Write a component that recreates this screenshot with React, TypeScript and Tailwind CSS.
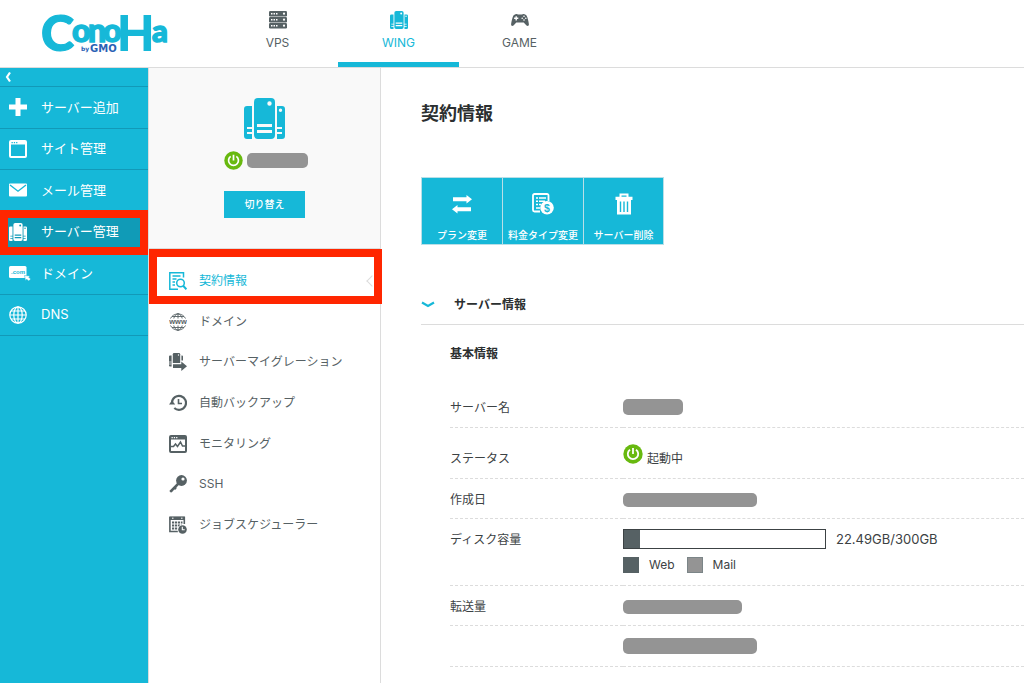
import type { ReactNode } from "react"
import clsx from "clsx"

type IconProps = { className?: string }

const Logo = () => (
    <svg viewBox="0 0 140 56" className="w-[140px] h-14 overflow-visible" role="img" aria-label="ConoHa by GMO">
        <g fill="#16b8d8" stroke="#16b8d8" fontFamily="Lato, sans-serif" fontWeight="900">
            <text x="1" y="51" fontSize="50" strokeWidth="1.2">C</text>
            <text x="32 48 63" y="42" fontSize="32" strokeWidth="1.4">ono</text>
            <text x="77" y="51" fontSize="52" strokeWidth="0" fontFamily="Liberation Sans, sans-serif" fontWeight="700">H</text>
            <text x="112" y="42" fontSize="31" strokeWidth="1.4">a</text>
        </g>
        <g fill="#2a5fb4" fontFamily="DejaVu Sans, sans-serif" fontWeight="700">
            <text x="41" y="51" fontSize="6">by</text>
            <text x="50" y="52" fontSize="10">GMO</text>
        </g>
    </svg>
)

const ServerIcon = ({ className }: IconProps) => (
    <svg viewBox="0 0 41 41" className={className} fill="currentColor" fillRule="evenodd" aria-hidden="true">
        <path d="M14 0h13a4 4 0 0 1 4 4v33a4 4 0 0 1-4 4H14a4 4 0 0 1-4-4V4a4 4 0 0 1 4-4ZM25.5 3.3a2.2 2.2 0 1 0 0 4.4a2.2 2.2 0 0 0 0-4.4ZM13 26v3h15v-3ZM13 32v3h15v-3Z" />
        <path d="M3 8h5v21H3v2h5v3H3v2h5v5H3a3 3 0 0 1-3-3V11a3 3 0 0 1 3-3Z" />
        <path d="M33 8h5a3 3 0 0 1 3 3v27a3 3 0 0 1-3 3h-5v-5h5v-2h-5v-3h5v-2h-5ZM36.5 10.5a1.7 1.7 0 1 0 0 3.4a1.7 1.7 0 0 0 0-3.4Z" />
    </svg>
)

const RackIcon = ({ className }: IconProps) => (
    <svg viewBox="0 0 18 18" className={className} fill="currentColor" aria-hidden="true">
        {[0, 6, 12].map((y) => (
            <g key={y}>
                <rect y={y} width="18" height="5.4" rx="1.2" />
                <g fill="#fff">
                    <rect x="2" y={y + 2} width="1.5" height="1.5" />
                    <rect x="4.5" y={y + 2} width="1.5" height="1.5" />
                    <rect x="7" y={y + 2} width="1.5" height="1.5" />
                    <circle cx="15" cy={y + 2.7} r="1.1" />
                </g>
            </g>
        ))}
    </svg>
)

const GamepadIcon = ({ className }: IconProps) => (
    <svg viewBox="0 0 18 18" className={className} fill="currentColor" aria-hidden="true">
        <path d="M4.5 3.2C5.5 2.6 6.6 3 7 3.6h4c.4-.6 1.5-1 2.5-.4 1.6.5 2.3 1.3 2.9 3.3.8 2.5 1.5 5.5 1.5 7.3 0 1.2-1.5 1.4-2.4.6L12.7 11.6H5.300L2.500 14.400C1.600 15.200.1 15 .1 13.800.1 12 .8 9 1.600 6.500c.6-2 1.300-2.800 2.900-3.300Z" />
        <g fill="#fff">
            <path d="M4.500 5.200h1.400v1.400h1.400v1.400H5.900v1.400H4.500V8H3.100V6.600h1.400Z" />
            <circle cx="13" cy="5.300" r=".8" />
            <circle cx="13" cy="9" r=".8" />
            <circle cx="11.200" cy="7.200" r=".8" />
            <circle cx="14.800" cy="7.200" r=".8" />
        </g>
    </svg>
)

const PlusIcon = ({ className }: IconProps) => (
    <svg viewBox="0 0 18 18" className={className} fill="currentColor" aria-hidden="true">
        <path d="M6.500 0h5v6.500H18v5h-6.500V18h-5v-6.500H0v-5h6.500Z" />
    </svg>
)

const WindowIcon = ({ className }: IconProps) => (
    <svg viewBox="0 0 18 18" className={className} aria-hidden="true">
        <rect x="1" y="1" width="16" height="16" rx="1" fill="none" stroke="currentColor" strokeWidth="2" />
        <path d="M1 1h16v3.500H1Z" fill="currentColor" />
        <path d="M2.500 2.700h6" stroke="#16b8d8" strokeWidth="1.200" strokeDasharray="1.300 1" />
    </svg>
)

const MailIcon = ({ className }: IconProps) => (
    <svg viewBox="0 0 18 18" className={className} aria-hidden="true">
        <rect y="2.500" width="18" height="13" rx="1" fill="currentColor" />
        <path d="M1 4l8 6.200L17 4" fill="none" stroke="#16b8d8" strokeWidth="1.400" />
    </svg>
)

const DotComIcon = ({ className }: IconProps) => (
    <svg viewBox="0 0 22 18" className={className} aria-hidden="true">
        <rect y="2" width="17.500" height="12" rx="1.500" fill="currentColor" />
        <text x="2" y="9.500" fontSize="6" fontWeight="700" fontFamily="Liberation Sans, sans-serif" fill="#16b8d8">.com</text>
        <path d="M15.500 11.500l5.500.5-1.200 1.200 1.900 1.900-2 2-1.900-1.900-1.300 1.300Z" fill="currentColor" stroke="#16b8d8" strokeWidth=".5" />
    </svg>
)

const GlobeIcon = ({ className }: IconProps) => (
    <svg viewBox="0 0 18 18" className={className} fill="none" stroke="currentColor" strokeWidth="1.200" aria-hidden="true">
        <circle cx="9" cy="9" r="8.200" />
        <ellipse cx="9" cy="9" rx="4.200" ry="8.200" />
        <path d="M9 .8v16.400M.8 9h16.400M2 5h14M2 13h14" />
    </svg>
)

const PowerIcon = ({ className }: IconProps) => (
    <svg viewBox="0 0 20 20" className={className} aria-hidden="true">
        <circle cx="10" cy="10" r="9.700" fill="#68b90f" />
        <path d="M7 5.700a5.200 5.200 0 1 0 6 0M10 4v6" fill="none" stroke="#fff" strokeWidth="1.800" />
    </svg>
)

const ContractIcon = ({ className }: IconProps) => (
    <svg viewBox="0 0 18 18" className={className} fill="none" stroke="currentColor" strokeWidth="1.500" aria-hidden="true">
        <path d="M14.500 5.500V.8H.8v16.400H9" />
        <path d="M3.500 4h8M3.500 7h4M3.500 10h2.500M3.500 13h2.500" strokeWidth="1.300" />
        <circle cx="11.500" cy="11" r="3.800" />
        <path d="M14.200 13.800l3.200 3.400" strokeWidth="2" />
    </svg>
)

const WwwIcon = ({ className }: IconProps) => (
    <svg viewBox="0 0 18 18" className={className} aria-hidden="true">
        <g fill="none" stroke="currentColor" strokeWidth=".9">
            <path d="M1.500 5.500a8.500 8.500 0 0 1 15 0M1.500 12.500a8.500 8.500 0 0 0 15 0M9 .5V5.500M9 12.500v5M3 3.500h12M3 14.500h12" />
            <path d="M4.800 5.500C5.200 3.500 6.500 1.300 9 .5c2.500.8 3.800 3 4.200 5M4.800 12.500c.4 2 1.700 4.200 4.200 5 2.500-.8 3.800-3 4.200-5" />
        </g>
        <text x="9" y="11" fontSize="7.500" fontWeight="700" textAnchor="middle" fontFamily="Liberation Sans, sans-serif" fill="currentColor">www</text>
    </svg>
)

const MigrationIcon = ({ className }: IconProps) => (
    <svg viewBox="0 0 18 18" className={className} fill="currentColor" aria-hidden="true">
        <path d="M5 0h5a1.200 1.200 0 0 1 1.200 1.200V10H3.800V1.200A1.200 1.200 0 0 1 5 0Z" />
        <path d="M1 2.500h1.600V13.500H1a1 1 0 0 1-1-1V3.500a1 1 0 0 1 1-1ZM12.400 2.500H13a1 1 0 0 1 1 1v4h-1.600Z" />
        <path d="M4 11.300h8.300V8.500L18 13.200 12.300 18v-2.900H4Z" />
        <path d="M0 9h2.600M0 11h2.600" stroke="#fff" strokeWidth=".7" />
        <circle cx="9.500" cy="2" r=".7" fill="#fff" />
    </svg>
)

const BackupIcon = ({ className }: IconProps) => (
    <svg viewBox="0 0 18 18" className={className} aria-hidden="true">
        <path d="M3 8.500A7 7 0 1 1 5.300 14" fill="none" stroke="currentColor" strokeWidth="2.200" />
        <path d="M0 10.500L3 6.500l3.200 4Z" fill="currentColor" />
        <path d="M9.500 5v4.500H13" fill="none" stroke="currentColor" strokeWidth="1.600" />
    </svg>
)

const MonitorIcon = ({ className }: IconProps) => (
    <svg viewBox="0 0 18 18" className={className} aria-hidden="true">
        <rect x="1" y="1" width="16" height="16" rx="1" fill="none" stroke="currentColor" strokeWidth="2" />
        <path d="M1 1h16v3.500H1Z" fill="currentColor" />
        <path d="M2.500 2.600h6" stroke="#fff" strokeWidth="1.200" strokeDasharray="1.300 1" />
        <path d="M2 11.500h2.500L6.500 9l2 2.500L11.500 7l2 4H16" fill="none" stroke="currentColor" strokeWidth="1.500" />
    </svg>
)

const KeyIcon = ({ className }: IconProps) => (
    <svg viewBox="0 0 18 18" className={className} aria-hidden="true">
        <circle cx="12.500" cy="5.500" r="5.400" fill="currentColor" />
        <path d="M9.500 8.500L1.200 16.800M5.500 12.500l1.500 1.500M3 15l1 1" stroke="currentColor" strokeWidth="2.500" />
        <circle cx="14" cy="4" r="1.600" fill="#fff" />
    </svg>
)

const JobIcon = ({ className }: IconProps) => (
    <svg viewBox="0 0 18 18" className={className} aria-hidden="true">
        <path d="M15.300 8V1.500H.9v14h8" fill="none" stroke="currentColor" strokeWidth="1.600" />
        <path d="M.5.500h15.300V4H.5Z" fill="currentColor" />
        <path d="M3 2.200h1.500M12 2.200h1.500" stroke="#fff" strokeWidth="1" />
        <path d="M3 6.500h10.500M3 9.500h10M3 12.500h6" stroke="currentColor" strokeWidth="2" strokeDasharray="2.200 .8" />
        <circle cx="13.500" cy="13.500" r="5" fill="#fff" />
        <circle cx="13.500" cy="13.500" r="4.300" fill="currentColor" />
        <path d="M13.300 10.800v3h2.400" fill="none" stroke="#fff" strokeWidth="1.100" />
    </svg>
)

const SwapIcon = ({ className }: IconProps) => (
    <svg viewBox="0 0 22 22" className={className} fill="currentColor" aria-hidden="true">
        <path d="M2 4.200h13.500V2L21 6.200l-5.500 4.200V8.200H2ZM20 14.200H6.500V12L1 16.200l5.500 4.200v-2.200H20Z" />
    </svg>
)

const BillingIcon = ({ className }: IconProps) => (
    <svg viewBox="0 0 22 22" className={className} aria-hidden="true">
        <path d="M16.500 8V2.500a1.500 1.500 0 0 0-1.500-1.500H2.500A1.500 1.500 0 0 0 1 2.500V17a1.500 1.500 0 0 0 1.500 1.500H8" fill="none" stroke="currentColor" strokeWidth="1.800" />
        <path d="M4 5h2M7 5h7M4 8.300h2M7 8.300h6M4 11.600h2M7 11.600h2M4 15h4" stroke="currentColor" strokeWidth="1.500" />
        <circle cx="15" cy="14.800" r="6.800" fill="currentColor" />
        <text x="15" y="18.600" fontSize="10.500" fontWeight="700" textAnchor="middle" fontFamily="Liberation Sans, sans-serif" fill="#16b8d8">$</text>
    </svg>
)

const TrashIcon = ({ className }: IconProps) => (
    <svg viewBox="0 0 22 22" className={className} aria-hidden="true">
        <path d="M7.500 4.500V1.500h7v3" fill="none" stroke="currentColor" strokeWidth="2" />
        <path d="M2.500 3.800h17V7h-17ZM4 7h14v14.500H4Z" fill="currentColor" />
        <path d="M7.500 8.500v10.500M11 8.500v10.500M14.500 8.500v10.500" stroke="#16b8d8" strokeWidth="1.400" />
    </svg>
)

const tabs = [
    { label: "VPS", Icon: RackIcon },
    { label: "WING", Icon: ServerIcon, active: true },
    { label: "GAME", Icon: GamepadIcon },
]

const mainMenu = [
    { label: "サーバー追加", Icon: PlusIcon },
    { label: "サイト管理", Icon: WindowIcon },
    { label: "メール管理", Icon: MailIcon },
    { label: "サーバー管理", Icon: ServerIcon, active: true },
    { label: "ドメイン", Icon: DotComIcon },
    { label: "DNS", Icon: GlobeIcon },
]

const subMenu = [
    { label: "契約情報", Icon: ContractIcon, active: true },
    { label: "ドメイン", Icon: WwwIcon },
    { label: "サーバーマイグレーション", Icon: MigrationIcon },
    { label: "自動バックアップ", Icon: BackupIcon },
    { label: "モニタリング", Icon: MonitorIcon },
    { label: "SSH", Icon: KeyIcon },
    { label: "ジョブスケジューラー", Icon: JobIcon },
]

const actions = [
    { label: "プラン変更", Icon: SwapIcon },
    { label: "料金タイプ変更", Icon: BillingIcon },
    { label: "サーバー削除", Icon: TrashIcon },
]

const disk = { used: 22.49, total: 300 }

const Masked = ({ className }: { className: string }) => (
    <span className={clsx("block rounded-[5px] bg-[#949494]", className)} />
)

const Row = ({ label, className, children }: {
    label: string
    className: string
    children: ReactNode
}) => (
    <tr className={clsx("border-b border-dashed border-[#dcdcdc]", className)}>
        <th scope="row" className="w-[173px] pt-[13px] text-left align-top font-normal leading-4">{label}</th>
        <td className="p-0 align-top">{children}</td>
    </tr>
)

const Header = () => (
    <header className="flex h-[68px] border-b border-[#dcdcdc] bg-white">
        <a href="#" className="w-[217px] shrink-0 pl-10">
            <Logo />
        </a>
        <nav className="flex">
            {tabs.map(({ label, Icon, active }) => (
                <a
                    key={label}
                    href="#"
                    className={clsx(
                        "flex w-[121px] flex-col items-center border-b-[5px] pt-[11px] text-xs leading-4",
                        active ? "border-[#16b8d8] text-[#16b8d8]" : "border-transparent text-[#566164]"
                    )}
                >
                    <Icon className="mb-1.5 size-[18px]" />
                    {label}
                </a>
            ))}
        </nav>
    </header>
)

const SideBar = () => (
    <aside className="w-[149px] shrink-0 border-r border-[#dcdcdc] bg-[#16b8d8] bg-clip-padding text-white">
        <button type="button" aria-label="メニューを閉じる" className="flex h-[19px] w-full items-center border-b border-[#1299b8] pl-1">
            <svg viewBox="0 0 8 12" className="h-3 w-2" fill="none" stroke="currentColor" strokeWidth="2.200" aria-hidden="true">
                <path d="M6 1.500L3 6l3 4.500" />
            </svg>
        </button>
        <nav className="grid h-[249px] grid-rows-6">
            {mainMenu.map(({ label, Icon, active }) => (
                <a
                    key={label}
                    href="#"
                    className={clsx(
                        "relative flex items-center border-b border-[#1299b8] pl-[9px] text-[13px]",
                        active && "bg-[#109bb7]"
                    )}
                >
                    <span className="w-8 shrink-0">
                        <Icon className="h-[18px]" />
                    </span>
                    {label}
                    {active && <span className="absolute inset-x-0 -top-0.5 -bottom-[3px] z-10 border-8 border-[#ff2600]" />}
                </a>
            ))}
        </nav>
    </aside>
)

const SubSideBar = () => (
    <aside className="w-[232px] shrink-0 border-r border-[#dcdcdc] bg-white">
        <div className="flex h-[181px] flex-col items-center border-b border-[#dcdcdc] bg-[#f9f9f9] pt-[30px]">
            <ServerIcon className="size-[41px] text-[#16b8d8]" />
            <div className="mt-3 flex items-center gap-1 pl-0.5">
                <PowerIcon className="size-[19px]" />
                <Masked className="h-[15px] w-[61px]" />
            </div>
            <button type="button" className="mt-[21px] h-[27px] w-[81px] bg-[#16b8d8] text-[10px] font-medium text-white">
                切り替え
            </button>
        </div>
        <nav className="mt-3 grid h-[284px] grid-rows-7">
            {subMenu.map(({ label, Icon, active }) => (
                <a
                    key={label}
                    href="#"
                    className={clsx(
                        "relative flex items-center gap-3 pl-5 text-xs",
                        active ? "text-[#16b8d8]" : "text-[#566164]"
                    )}
                >
                    <Icon className="size-[18px]" />
                    {label}
                    {active && (
                        <>
                            <span className="absolute right-1 size-2 rotate-45 border-b border-l border-[#dcdcdc]" />
                            <span className="absolute -right-0.5 left-0 -top-3 h-[55px] border-8 border-[#ff2600]" />
                        </>
                    )}
                </a>
            ))}
        </nav>
    </aside>
)

const Content = () => (
    <main className="min-w-0 flex-1 pt-8 pl-10 text-xs text-[#3c4244]">
        <h1 className="text-lg leading-7 font-bold text-[#2b2f30]">契約情報</h1>
        <div className="mt-[49px] flex">
            {actions.map(({ label, Icon }) => (
                <button
                    key={label}
                    type="button"
                    className="flex h-[68px] w-[81px] flex-col items-center border border-r-0 border-[#b9dfe7] bg-[#16b8d8] pt-[15px] text-[10px] leading-4 font-medium whitespace-nowrap text-white last:border-r"
                >
                    <Icon className="mb-3 size-[22px]" />
                    {label}
                </button>
            ))}
        </div>
        <section className="mt-10">
            <h2 className="flex h-10 items-center border-b border-[#dcdcdc] font-bold text-[#2b2f30]">
                <svg viewBox="0 0 14 8" className="mr-[19px] h-2 w-3.5" fill="none" stroke="#16b8d8" strokeWidth="2.200" aria-hidden="true">
                    <path d="M1 1.500l6 3.500 6-3.500" />
                </svg>
                サーバー情報
            </h2>
            <div className="pl-[29px]">
                <h3 className="mt-[21px] leading-4 font-bold text-[#2b2f30]">基本情報</h3>
                <table className="mt-[25px] w-full border-collapse">
                    <tbody>
                        <Row label="サーバー名" className="h-10">
                            <Masked className="mt-3 h-4 w-[60px]" />
                        </Row>
                        <Row label="ステータス" className="h-[51px] [&>th]:pt-[23px]">
                            <span className="mt-4 flex items-start gap-1">
                                <PowerIcon className="size-5" />
                                <span className="mt-[7px] leading-4">起動中</span>
                            </span>
                        </Row>
                        <Row label="作成日" className="h-10">
                            <Masked className="mt-3.5 h-3.5 w-[134px]" />
                        </Row>
                        <Row label="ディスク容量" className="h-[67px]">
                            <div className="mt-2.5 flex items-center gap-2.5">
                                <div
                                    role="meter"
                                    aria-label="ディスク容量"
                                    aria-valuenow={disk.used}
                                    aria-valuemax={disk.total}
                                    className="h-5 w-[203px] border border-[#3c4244] bg-white"
                                >
                                    <div className="h-full min-w-4 bg-[#566164]" style={{ width: `${disk.used / disk.total * 100}%` }} />
                                </div>
                                <span className="text-[13px] leading-4">{disk.used}GB/{disk.total}GB</span>
                            </div>
                            <div className="mt-2 flex items-center leading-4">
                                <span className="mr-2.5 size-4 bg-[#566164]" />
                                Web
                                <span className="mr-2.5 ml-3 size-4 border border-[#7b8588] bg-[#949494]" />
                                Mail
                            </div>
                        </Row>
                        <Row label="転送量" className="h-10">
                            <Masked className="mt-3.5 h-3.5 w-[119px]" />
                        </Row>
                        <Row label="" className="h-[41px]">
                            <Masked className="mt-3 h-4 w-[134px]" />
                        </Row>
                    </tbody>
                </table>
            </div>
        </section>
    </main>
)

export default function App() {
    return (
        <div className="flex min-h-screen flex-col bg-white font-['Inter','Noto_Sans_CJK_JP',sans-serif]">
            <Header />
            <div className="flex flex-1">
                <SideBar />
                <SubSideBar />
                <Content />
            </div>
        </div>
    )
}
